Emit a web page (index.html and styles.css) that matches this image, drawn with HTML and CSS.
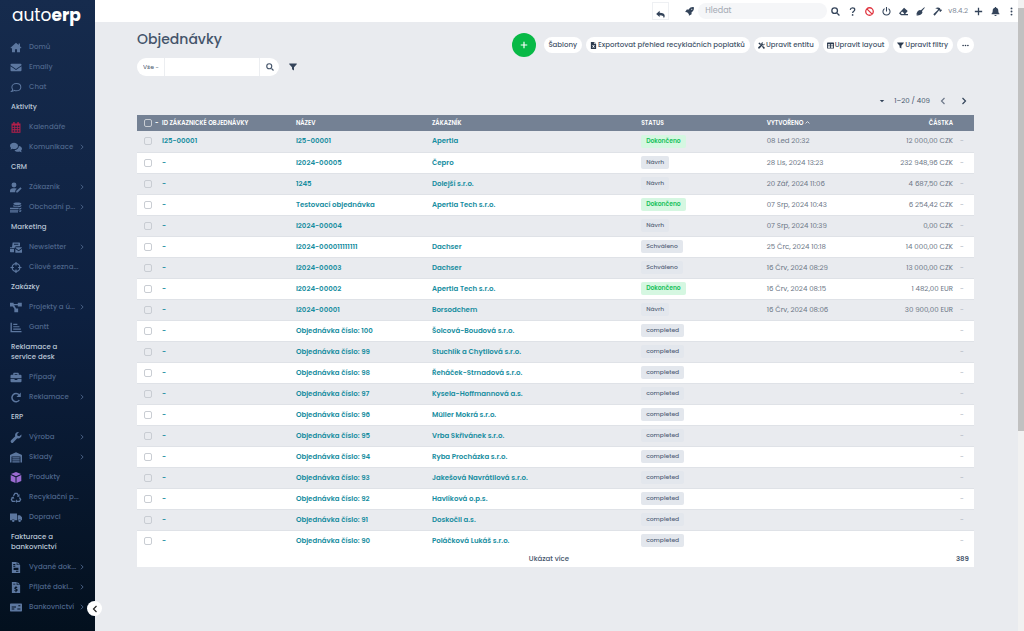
FILE: index.html
```html
<!DOCTYPE html>
<html lang="cs">
<head>
  <meta charset="UTF-8" />
  <meta name="viewport" content="width=device-width, initial-scale=1.0"/>
  <title>Objednávky</title>
  <link rel="stylesheet" href="styles.css">
</head>
<body>
  <!-- Icon set -->
  <svg class="sprite" aria-hidden="true">
    <symbol id="i-home" viewBox="0 0 16 16"><path d="M8 1 0 8.2l1 1.1 1.2-1V15h4.3v-4.6h3V15h4.3V8.300l1.200 1 1-1.100-2.200-2V2.200h-2v2.100z"/></symbol>
    <symbol id="i-mail" viewBox="0 0 16 16"><path d="M1.500 2.500h13A1.500 1.500 0 0 1 16 4v.7L8 10 0 4.700V4a1.500 1.500 0 0 1 1.500-1.500zM0 6.300l8 5.200 8-5.200V12a1.500 1.500 0 0 1-1.500 1.500h-13A1.500 1.500 0 0 1 0 12z"/></symbol>
    <symbol id="i-chat" viewBox="0 0 16 16"><path d="M8.500 2.200c3.800 0 6.500 2.300 6.500 5.300s-2.700 5.300-6.500 5.300c-1 0-2-.2-2.800-.5-1 .8-2.400 1.500-4.200 1.500 1-.9 1.500-2 1.700-3.100A4.800 4.800 0 0 1 2 7.500c0-3 2.700-5.300 6.500-5.300z" fill="none" stroke="currentColor" stroke-width="1.500"/></symbol>
    <symbol id="i-calendar" viewBox="0 0 16 16"><path fill-rule="evenodd" d="M4 0h2v2h4V0h2v2h2.500v13.500h-13V2H4zM3 5v2.500h2.500V5zm3.800 0v2.500h2.500V5zm3.700 0v2.500H13V5zM3 8.800v1.700h2.500V8.800zm3.800 0v1.700h2.500V8.800zm3.700 0v1.700H13V8.800zM3 12v2h2.500v-2zm3.800 0v2h2.500v-2zm3.700 0v2H13v-2z"/></symbol>
    <symbol id="i-comments" viewBox="0 0 18 16"><path d="M6 1c3.400 0 6 2 6 4.600s-2.600 4.700-6 4.700c-.8 0-1.600-.1-2.300-.4-.8.600-2 1.100-3.400 1.100.7-.7 1.100-1.500 1.300-2.400C.6 7.800 0 6.800 0 5.600 0 3 2.600 1 6 1z"/><path d="M13.300 5.800C16 6.100 18 7.900 18 10c0 1.100-.6 2.100-1.500 2.900.2.900.700 1.600 1.300 2.300-1.400 0-2.500-.5-3.400-1.100-.7.200-1.500.4-2.300.4-2.300 0-4.300-1-5.300-2.500 3.700-.3 6.700-2.800 6.500-6.200z"/></symbol>
    <symbol id="i-user" viewBox="0 0 18 16"><circle cx="6" cy="4.200" r="3.700"/><path d="M0 15v-2.200C0 10.500 2 9 4.200 9h3.600c1 0 1.800.3 2.500.8l-2 2-.6 3.200zM15.500 7.500l2 2-6 6H9.300v-2.200z"/></symbol>
    <symbol id="i-coins" viewBox="0 0 18 16"><path d="M5 2.500C5 1.300 7.700.5 11 .5s6 .8 6 2-2.700 2-6 2-6-.8-6-2zM5 4.300C6.300 5.200 8.500 5.600 11 5.600s4.800-.5 6-1.300v1.600c0 .7-1.500 1.400-3.500 1.700L12 6.800H5zM14 8.900c1.300-.2 2.300-.6 3-1v1.600c0 .7-1.300 1.400-3 1.700zM14 12.600c1.300-.3 2.300-.6 3-1v1.500c0 .7-1.300 1.300-3 1.700z"/><path d="M0 8.500h13v1.700H0zm0 2.700h12.500v1.500H0zm0 2.500h12v1.800H0z"/></symbol>
    <symbol id="i-bulk" viewBox="0 0 18 16"><path d="M4 .5h10a1 1 0 0 1 1 1V6H9.500A2.500 2.500 0 0 0 7 8.500V9H0V7.500h3zm2 2v1.300h6.500V2.500zM0 10.200h6V15H1a1 1 0 0 1-1-1z"/><path d="M9 7.500h8a1 1 0 0 1 1 1L13 12 8 8.500a1 1 0 0 1 1-1zM8 10.200l5 3.500 5-3.500V15a.8.800 0 0 1-1 1H9a1 1 0 0 1-1-1z"/></symbol>
    <symbol id="i-target" viewBox="0 0 16 16"><g fill="none" stroke="currentColor" stroke-width="1.800"><circle cx="8" cy="8" r="5.600"/><path d="M8 0v5M8 11v5M0 8h5M11 8h5"/></g></symbol>
    <symbol id="i-project" viewBox="0 0 18 16"><path d="M0 1h5.500v1.800h6.200V1h6v5.500h-6V4.700H6.200l3 4.800h3V15H6.500V9.700L4.200 6.500H0z"/></symbol>
    <symbol id="i-gantt" viewBox="0 0 16 16"><path d="M0 1h2v12h14v2H0zM4 2.500h6v1.800H4zm0 3.500h9v1.800H4zm0 3.500h11v1.800H4z"/></symbol>
    <symbol id="i-case" viewBox="0 0 16 16"><path fill-rule="evenodd" d="M5 1h6a1 1 0 0 1 1 1v2h2.500A1.500 1.500 0 0 1 16 5.500V9H0V5.500A1.500 1.500 0 0 1 1.500 4H4V2a1 1 0 0 1 1-1zm1 1.800V4h4V2.800zM0 10.200h6v1.600h4v-1.600h6v3.300a1.500 1.500 0 0 1-1.500 1.500h-13A1.500 1.500 0 0 1 0 13.500z"/></symbol>
    <symbol id="i-redo" viewBox="0 0 16 16"><path d="M12.800 11.800A6 6 0 1 1 12.500 4" fill="none" stroke="currentColor" stroke-width="2.200"/><path d="M15 .8v6.400H8.600z"/></symbol>
    <symbol id="i-wrench" viewBox="0 0 16 16"><path d="M15.800 3.700a4.600 4.600 0 0 1-6 5.400l-5.900 6a2 2 0 0 1-3-3l6-5.900A4.600 4.600 0 0 1 12.300.2L9.700 2.800l.4 2.700 2.700.5z"/></symbol>
    <symbol id="i-store" viewBox="0 0 18 16"><path d="M9 0l8.300 3.800a1 1 0 0 1 .7 1V15.500h-2.300V6.500H2.300v9H0V4.800a1 1 0 0 1 .7-1zM3.500 7.700h11v1.800h-11zm0 3h11v1.800h-11zm0 3h11v1.800h-11z"/></symbol>
    <symbol id="i-cube" viewBox="0 0 16 16"><path d="M8 0l7.300 3L8 6 .7 3zM.3 4.500l7 3V16l-7-3zM15.700 4.500l-7 3V16l7-3z"/></symbol>
    <symbol id="i-recycle" viewBox="0 0 16 16"><path d="M4.300 5.500 6.500 2h3l2 3.200M13 8l1.700 3-1.500 2.500H9M6.500 13.500H2.700L1.300 11 3 8" fill="none" stroke="currentColor" stroke-width="1.900"/><path d="M13 3v4H9.200zM9.500 10.500v5.500L6.800 13.300zM.8 7.500 4.600 6.500 5.500 10z"/></symbol>
    <symbol id="i-truck" viewBox="0 0 18 16"><path d="M0 2h10.500v10H7a2.200 2.200 0 0 0-4.200 0H0zM11.500 4.500H15l3 3.300V12h-1.500a2.200 2.200 0 0 0-4.200 0h-.8z"/><circle cx="4.900" cy="12.800" r="1.900"/><circle cx="14.400" cy="12.800" r="1.900"/></symbol>
    <symbol id="i-file" viewBox="0 0 16 16"><path fill-rule="evenodd" d="M2 0h7v4.500h5V16H2zM4 3v1.200h3V3zm0 2.600v1.200h3V5.600zM4.500 8.500v3h7v-3zm3.500 4.300V14h3.500v-1.200z"/><path d="M10 0l4 3.700h-4z"/></symbol>
    <symbol id="i-invoice" viewBox="0 0 16 16"><path fill-rule="evenodd" d="M2 0h7v4.500h5V16H2zM4 2.500v1.200h3V2.500zM7.300 6v1.200c-1 .2-1.800.8-1.800 1.800 0 2 3 1.600 3 2.600 0 .6-1.600.6-2.500 0l-.5 1.300c.5.300 1.100.5 1.800.6V15h1.400v-1.500c1-.2 1.800-.8 1.800-1.800 0-2.200-3-1.800-3-2.700 0-.5 1.300-.5 2.100-.1l.5-1.200a4 4 0 0 0-1.400-.5V6z"/><path d="M10 0l4 3.700h-4z"/></symbol>
    <symbol id="i-bank" viewBox="0 0 18 16"><path fill-rule="evenodd" d="M1 2h16a1 1 0 0 1 1 1v10a1 1 0 0 1-1 1H1a1 1 0 0 1-1-1V3a1 1 0 0 1 1-1zm1.500 4.500V8H9V6.500zm0 3V11h4V9.500zm8.500 0V11h4.500V9.500zm1.500-5V6h3V4.500z"/></symbol>
    <symbol id="i-right" viewBox="0 0 16 16"><path d="M5 2l6 6-6 6" fill="none" stroke="currentColor" stroke-width="2.400"/></symbol>
    <symbol id="i-left" viewBox="0 0 16 16"><path d="M11 2L5 8l6 6" fill="none" stroke="currentColor" stroke-width="2.400"/></symbol>
    <symbol id="i-up" viewBox="0 0 16 16"><path d="M2 11l6-6 6 6" fill="none" stroke="currentColor" stroke-width="2.500"/></symbol>
    <symbol id="i-caret" viewBox="0 0 16 16"><path d="M2 5h12l-6 6z"/></symbol>
    <symbol id="i-reply" viewBox="0 0 16 16"><path d="M6.500 1.500v3.200c5.500.1 9 1.500 9 6 0 1.600-.8 3-2 4 .8-3.700-1.500-5.200-7-5.300v3.200L.3 7z"/></symbol>
    <symbol id="i-rocket" viewBox="0 0 16 16"><path fill-rule="evenodd" d="M15.700.3C11.500-.3 9 1 6.700 4.300H3.200L.3 9l3.400.200 3.100 3.100L7 15.700l4.700-2.900V9.300C15 7 16.300 4.500 15.700.3zM12 3a1 1 0 1 1 0 2 1 1 0 0 1 0-2z"/></symbol>
    <symbol id="i-search" viewBox="0 0 16 16"><circle cx="6.500" cy="6.500" r="5" fill="none" stroke="currentColor" stroke-width="2.300"/><path d="M10.200 11.800l1.600-1.600 4 4-1.600 1.600z"/></symbol>
    <symbol id="i-help" viewBox="0 0 16 16"><path d="M4 5c.3-2.500 2-3.500 4-3.500 2.300 0 4 1.200 4 3.200C12 7.500 8.200 7.300 8.200 10.500" fill="none" stroke="currentColor" stroke-width="2.200"/><circle cx="8.200" cy="14" r="1.500"/></symbol>
    <symbol id="i-ban" viewBox="0 0 16 16"><path d="M8 1.300a6.700 6.700 0 1 1 0 13.400A6.700 6.700 0 0 1 8 1.300zM3.300 3.300l9.400 9.400" fill="none" stroke="currentColor" stroke-width="2.300"/></symbol>
    <symbol id="i-power" viewBox="0 0 16 16"><path d="M4.500 2.800a6.300 6.300 0 1 0 7 0M8 0v8" fill="none" stroke="currentColor" stroke-width="1.900"/></symbol>
    <symbol id="i-eraser" viewBox="0 0 16 16"><path fill-rule="evenodd" d="M9 1.500 15.500 7 11 12.500h5v2H3.500L0 11zM5.500 8 3 10.800l1.700 1.700h3.500l1-1.200z"/></symbol>
    <symbol id="i-broom" viewBox="0 0 16 16"><path d="M14.700.3l1 1-5.200 6.200 1 1.500c-.5 3.800-3.500 6-10.900 6.200l2.300-2.400-2.400.8C1.300 9 3.300 6.200 7 5.300l1.700.6z"/></symbol>
    <symbol id="i-hammer" viewBox="0 0 16 16"><path d="M4 2.500C7 0 10.500.2 12.500 2.300L13 4l1 .8 1-.2 1 1.200-3 3.100-1.200-1.100V6.600l-1-.9L3 15.500.5 13 9 5 7.500 3.200z"/></symbol>
    <symbol id="i-plus" viewBox="0 0 16 16"><path d="M8 1.500v13M1.500 8h13" fill="none" stroke="currentColor" stroke-width="2.300"/></symbol>
    <symbol id="i-bell" viewBox="0 0 16 16"><path d="M7 0h2v1.500c2.500.5 4 2.300 4 5 0 3 .7 4 2 5.200v1.300H1v-1.300C2.300 10.500 3 9.500 3 6.500c0-2.700 1.500-4.500 4-5zM6 14h4a2 2 0 0 1-4 0z"/></symbol>
    <symbol id="i-dots-v" viewBox="0 0 16 16"><circle cx="8" cy="2.500" r="1.700"/><circle cx="8" cy="8" r="1.700"/><circle cx="8" cy="13.500" r="1.700"/></symbol>
    <symbol id="i-dots" viewBox="0 0 16 16"><circle cx="2.500" cy="8" r="1.900"/><circle cx="8" cy="8" r="1.900"/><circle cx="13.500" cy="8" r="1.900"/></symbol>
    <symbol id="i-filter" viewBox="0 0 16 16"><path d="M.5 1h15v1.500L10 8.500V15l-4-2.500v-4L.5 2.500z"/></symbol>
    <symbol id="i-excel" viewBox="0 0 16 16"><path fill-rule="evenodd" d="M2 0h7v4.500h5V16H2zM5 7l2 3-2 3.300h1.800L8 11.200l1.200 2.100H11L9 10l2-3H9.200L8 8.800 6.800 7z"/><path d="M10 0l4 3.700h-4z"/></symbol>
    <symbol id="i-tools" viewBox="0 0 16 16"><path d="M3 1l3.500 3v1.500l5.500 5h1.500l2.300 3L13.500 15.800l-3-2.600v-1.700L5.300 6.300H4L.8 3z"/><path d="M15.500 3.500a4 4 0 0 1-5.300 4L4 14.500a2 2 0 0 1-3-2.800l6.500-6A4 4 0 0 1 12 .5L10.300 2.800l.5 2.300 2.300.4z"/></symbol>
    <symbol id="i-table" viewBox="0 0 16 16"><path fill-rule="evenodd" d="M1.500 1h13A1.500 1.500 0 0 1 16 2.500v11a1.500 1.500 0 0 1-1.500 1.500h-13A1.500 1.500 0 0 1 0 13.500v-11A1.500 1.500 0 0 1 1.500 1zM2 5v2.800h5V5zm7 0v2.800h5V5zM2 9.700V13h5V9.700zm7 0V13h5V9.700z"/></symbol>
  </svg>

  <div class="app">
    <aside class="sidebar">
      <a class="logo" href="#">auto<b>erp</b></a>
      <nav>
        <a class="nav-item" href="#"><svg><use href="#i-home"/></svg><span>Domů</span></a>
        <a class="nav-item" href="#"><svg><use href="#i-mail"/></svg><span>Emaily</span></a>
        <a class="nav-item" href="#"><svg><use href="#i-chat"/></svg><span>Chat</span></a>
        <h2>Aktivity</h2>
        <a class="nav-item" href="#"><svg class="red"><use href="#i-calendar"/></svg><span>Kalendáře</span></a>
        <a class="nav-item" href="#"><svg><use href="#i-comments"/></svg><span>Komunikace</span><svg class="more"><use href="#i-right"/></svg></a>
        <h2>CRM</h2>
        <a class="nav-item" href="#"><svg><use href="#i-user"/></svg><span>Zákazník</span><svg class="more"><use href="#i-right"/></svg></a>
        <a class="nav-item" href="#"><svg><use href="#i-coins"/></svg><span>Obchodní p...</span><svg class="more"><use href="#i-right"/></svg></a>
        <h2>Marketing</h2>
        <a class="nav-item" href="#"><svg><use href="#i-bulk"/></svg><span>Newsletter</span><svg class="more"><use href="#i-right"/></svg></a>
        <a class="nav-item" href="#"><svg><use href="#i-target"/></svg><span>Cílové sezna...</span></a>
        <h2>Zakázky</h2>
        <a class="nav-item" href="#"><svg><use href="#i-project"/></svg><span>Projekty a ú...</span><svg class="more"><use href="#i-right"/></svg></a>
        <a class="nav-item" href="#"><svg><use href="#i-gantt"/></svg><span>Gantt</span></a>
        <h2>Reklamace a service desk</h2>
        <a class="nav-item" href="#"><svg><use href="#i-case"/></svg><span>Případy</span></a>
        <a class="nav-item" href="#"><svg><use href="#i-redo"/></svg><span>Reklamace</span><svg class="more"><use href="#i-right"/></svg></a>
        <h2>ERP</h2>
        <a class="nav-item" href="#"><svg><use href="#i-wrench"/></svg><span>Výroba</span><svg class="more"><use href="#i-right"/></svg></a>
        <a class="nav-item" href="#"><svg><use href="#i-store"/></svg><span>Sklady</span><svg class="more"><use href="#i-right"/></svg></a>
        <a class="nav-item" href="#"><svg class="purple"><use href="#i-cube"/></svg><span>Produkty</span></a>
        <a class="nav-item" href="#"><svg><use href="#i-recycle"/></svg><span>Recyklační p...</span></a>
        <a class="nav-item" href="#"><svg><use href="#i-truck"/></svg><span>Dopravci</span></a>
        <h2>Fakturace a bankovnictví</h2>
        <a class="nav-item" href="#"><svg><use href="#i-file"/></svg><span>Vydané dok...</span><svg class="more"><use href="#i-right"/></svg></a>
        <a class="nav-item" href="#"><svg><use href="#i-invoice"/></svg><span>Přijaté dokl...</span><svg class="more"><use href="#i-right"/></svg></a>
        <a class="nav-item" href="#"><svg><use href="#i-bank"/></svg><span>Bankovnictví</span><svg class="more"><use href="#i-right"/></svg></a>
      </nav>
      <button class="collapse" type="button" aria-label="Sbalit menu"><svg><use href="#i-left"/></svg></button>
    </aside>

    <div class="page">
      <header class="topbar">
        <button class="back" type="button" aria-label="Zpět"><svg><use href="#i-reply"/></svg></button>
        <button class="icon-btn" type="button" aria-label="Rychlý start"><svg><use href="#i-rocket"/></svg></button>
        <input class="global-search" type="search" placeholder="Hledat" aria-label="Hledat">
        <div class="tools">
          <button class="icon-btn" type="button" aria-label="Vyhledat"><svg><use href="#i-search"/></svg></button>
          <button class="icon-btn" type="button" aria-label="Nápověda"><svg><use href="#i-help"/></svg></button>
          <button class="icon-btn ban" type="button" aria-label="Zakázat"><svg><use href="#i-ban"/></svg></button>
          <button class="icon-btn" type="button" aria-label="Vypnout"><svg><use href="#i-power"/></svg></button>
          <button class="icon-btn" type="button" aria-label="Vymazat"><svg><use href="#i-eraser"/></svg></button>
          <button class="icon-btn" type="button" aria-label="Vyčistit"><svg><use href="#i-broom"/></svg></button>
          <button class="icon-btn" type="button" aria-label="Sestavit"><svg><use href="#i-hammer"/></svg></button>
          <span class="version">v8.4.2</span>
          <button class="icon-btn" type="button" aria-label="Přidat"><svg><use href="#i-plus"/></svg></button>
          <button class="icon-btn" type="button" aria-label="Upozornění"><svg><use href="#i-bell"/></svg></button>
          <button class="icon-btn narrow" type="button" aria-label="Další"><svg><use href="#i-dots-v"/></svg></button>
        </div>
      </header>

      <main>
        <div class="page-head">
          <h1>Objednávky</h1>
          <div class="actions">
            <button class="add" type="button" aria-label="Vytvořit"><svg><use href="#i-plus"/></svg></button>
            <button class="pill" type="button">Šablony</button>
            <button class="pill" type="button"><svg><use href="#i-excel"/></svg>Exportovat přehled recyklačních poplatků</button>
            <button class="pill" type="button"><svg><use href="#i-tools"/></svg>Upravit entitu</button>
            <button class="pill" type="button"><svg><use href="#i-table"/></svg>Upravit layout</button>
            <button class="pill" type="button"><svg><use href="#i-filter"/></svg>Upravit filtry</button>
            <button class="pill round" type="button" aria-label="Více"><svg><use href="#i-dots"/></svg></button>
          </div>
        </div>

        <div class="search-row">
          <form class="search-box">
            <select aria-label="Filtr"><option>Vše -</option></select>
            <input type="text" aria-label="Hledaný text">
            <button type="button" aria-label="Hledat"><svg><use href="#i-search"/></svg></button>
          </form>
          <button class="icon-btn" type="button" aria-label="Filtry"><svg><use href="#i-filter"/></svg></button>
        </div>

        <div class="pager">
          <button class="icon-btn small" type="button" aria-label="Možnosti"><svg><use href="#i-caret"/></svg></button>
          <span>1–20 / 409</span>
          <button class="icon-btn dim" type="button" aria-label="Předchozí"><svg><use href="#i-left"/></svg></button>
          <button class="icon-btn" type="button" aria-label="Další strana"><svg><use href="#i-right"/></svg></button>
        </div>

        <table class="orders">
          <thead>
            <tr>
              <th class="c-check"><input type="checkbox" aria-label="Vybrat vše"><span class="check-menu">-</span></th>
              <th class="c-id">ID zákaznické objednávky</th>
              <th class="c-name">Název</th>
              <th class="c-customer">Zákazník</th>
              <th class="c-status">Status</th>
              <th class="c-created">Vytvořeno <svg><use href="#i-up"/></svg></th>
              <th class="c-amount">Částka</th>
              <th class="c-menu"></th>
            </tr>
          </thead>
          <tbody id="orderRows"></tbody>
        </table>
        <div class="table-foot">
          <button type="button">Ukázat více</button>
          <span>389</span>
        </div>
      </main>
    </div>

    <div class="scrollbar"><div class="thumb"></div></div>
  </div>
  <script src="script.js"></script>
</body>
</html>
```

FILE: styles.css
```css
* {
  box-sizing: border-box;
}

body {
  margin: 0;
  font-family: Poppins, Inter, "Noto Sans", sans-serif;
  font-size: 7px;
  line-height: 10px;
  color: #44546a;
  background-color: #e9ebef;
}

button, input, select {
  font: inherit;
  color: inherit;
  border: 0;
  padding: 0;
  background: none;
}

button {
  cursor: pointer;
}

a {
  color: inherit;
  text-decoration: none;
}

svg {
  display: block;
  width: 8px;
  height: 8px;
  fill: currentColor;
  flex: none;
}

.sprite {
  position: absolute;
  width: 0;
  height: 0;
}

.app {
  display: flex;
  min-height: 100vh;
}

/* Sidebar */
.sidebar {
  position: relative;
  flex: none;
  width: 95px;
  padding: 4px 0 14px;
  background: linear-gradient(#162b4d, #0d2040 50%, #03101e);
}

.logo {
  display: block;
  height: 33px;
  padding-left: 12px;
  font-size: 17px;
  line-height: 22px;
  font-weight: 400;
  color: #fff;
}

.logo b {
  font-weight: 700;
}

.sidebar h2 {
  margin: 0;
  padding: 5px 20px 5px 11px;
  font-size: 7px;
  line-height: 10px;
  font-weight: 500;
  color: #bcc8d8;
}

.nav-item {
  display: flex;
  align-items: center;
  height: 20px;
  padding: 0 10px 0 10px;
  font-weight: 500;
  color: #4e668b;
}

.nav-item svg {
  width: 12px;
  height: 11px;
  margin-right: 7px;
  color: #5c779f;
}

.nav-item span {
  flex: 1;
  white-space: nowrap;
}

.nav-item .more {
  width: 6px;
  height: 6px;
  margin: 0;
  color: #4e668b;
}

.nav-item .red {
  color: #b51f4a;
}

.nav-item .purple {
  color: #9a6bd0;
}

.collapse {
  position: absolute;
  right: -7px;
  bottom: 15px;
  display: flex;
  align-items: center;
  justify-content: center;
  width: 15px;
  height: 15px;
  border-radius: 50%;
  color: #222;
  background-color: #fff;
}

/* Top bar */
.page {
  flex: 1;
  min-width: 0;
}

.topbar {
  display: flex;
  align-items: center;
  justify-content: flex-end;
  height: 22px;
  background-color: #fff;
}

.icon-btn {
  display: flex;
  align-items: center;
  justify-content: center;
  width: 17px;
  height: 16px;
  color: #34445a;
}

.icon-btn.narrow {
  width: 14px;
}

.back {
  display: flex;
  align-items: flex-end;
  justify-content: center;
  width: 17px;
  height: 18px;
  margin-right: 12px;
  border: 1px solid #eef0f3;
  color: #34445a;
}

.topbar svg {
  width: 9px;
  height: 9px;
}

.global-search {
  width: 129px;
  height: 16px;
  padding: 0 7px;
  border-radius: 8px;
  font-size: 8px;
  background-color: #f5f6f8;
}

.global-search::placeholder {
  color: #a3a9b3;
}

.tools {
  display: flex;
  align-items: center;
}

.ban {
  color: #e0343f;
}

.version {
  padding: 0 2px;
  color: #7c8796;
}

/* Page heading */
main {
  padding: 10px 44px 20px 42px;
}

.page-head {
  display: flex;
  justify-content: space-between;
  height: 26px;
}

h1 {
  margin: 0;
  font-size: 14px;
  line-height: 15px;
  font-weight: 500;
  color: #44546a;
}

.actions {
  display: flex;
  align-items: center;
  gap: 4px;
}

.add {
  display: flex;
  align-items: center;
  justify-content: center;
  width: 24px;
  height: 24px;
  margin-right: 4px;
  border-radius: 50%;
  color: #fff;
  background-color: #08b946;
}

.pill {
  display: flex;
  align-items: center;
  gap: 1px;
  height: 16px;
  padding: 0 5px 0 4px;
  border-radius: 8px;
  font-weight: 500;
  white-space: nowrap;
  background-color: #fff;
}

.pill svg {
  width: 7px;
  height: 7px;
  color: #2b3a4e;
}

.round {
  justify-content: center;
  width: 17px;
  padding: 0;
}

.search-row {
  display: flex;
  align-items: center;
  gap: 5px;
  height: 18px;
}

.search-box {
  display: flex;
  width: 142px;
  height: 18px;
  border-radius: 9px;
  overflow: hidden;
  background-color: #fff;
}

.search-box select {
  width: 28px;
  padding-left: 6px;
  border-right: 1px solid #eceef1;
  font-size: 6px;
  appearance: none;
}

.search-box input {
  flex: 1;
  min-width: 0;
}

.search-box button {
  display: flex;
  align-items: center;
  justify-content: center;
  width: 20px;
  border-left: 1px solid #eceef1;
}

/* Paging */
.pager {
  display: flex;
  align-items: center;
  justify-content: flex-end;
  gap: 4px;
  margin: 17px 2px 6px 0;
}

.pager .small svg {
  width: 6px;
  height: 6px;
}

.pager .dim {
  color: #6d7889;
}

/* Orders table */
.orders {
  width: 100%;
  table-layout: fixed;
  border-collapse: collapse;
}

.orders th,
.orders td {
  padding: 0;
  text-align: left;
  white-space: nowrap;
}

.orders th {
  height: 16px;
  font-size: 6px;
  font-weight: 600;
  text-transform: uppercase;
  color: #fff;
  background-color: #748194;
}

.orders th svg {
  display: inline-block;
  width: 5px;
  height: 5px;
}

.orders td {
  height: 21px;
  border-bottom: 1px solid #dfe2e7;
  color: #6b7686;
}

.orders tbody tr:nth-child(even) {
  background-color: #fff;
}

.orders tbody tr:last-child td {
  border-bottom: 0;
}

.orders input {
  appearance: none;
  display: inline-block;
  width: 8px;
  height: 8px;
  margin: 0 0 0 7px;
  border: 1px solid #c9cdd3;
  border-radius: 2px;
  vertical-align: middle;
}

.orders a {
  font-weight: 600;
  color: #168da0;
}

.check-menu {
  margin-left: 3px;
}

.c-check { width: 25px; }
.c-id { width: 16%; }
.c-name { width: 136px; }
.c-customer { width: 25%; }
.c-status { width: 15%; }
.c-created { width: 14%; }
.c-menu { width: 21px; }

.orders .c-amount {
  text-align: right;
}

.orders .c-menu {
  padding-left: 7px;
  color: #adb4be;
}

.badge {
  display: inline-block;
  padding: 2px 5px;
  border-radius: 2px;
  font-size: 6px;
  line-height: 9px;
  font-weight: 500;
  color: #56647a;
  background-color: #e3e7ed;
}

.badge.done {
  font-weight: 600;
  color: #18c25b;
  background-color: #d5f7e1;
}

.table-foot {
  display: flex;
  align-items: center;
  height: 16px;
  padding: 0 5px;
  font-weight: 500;
  background-color: #fff;
}

.table-foot button {
  flex: 1;
  font-weight: 500;
}

.table-foot span {
  font-weight: 600;
}

/* Page scroll track */
.scrollbar {
  flex: none;
  width: 6px;
  padding-top: 8px;
  background-color: #f1f1f1;
}

.thumb {
  height: 67vh;
  background-color: #c1c1c1;
}
```

FILE: script.js
```js
// id, name, customer, status, created, amount
const orders = [
  ['I25-00001', 'I25-00001', 'Apertia', 'Dokončeno', '08 Led 20:32', '12 000,00 CZK'],
  ['-', 'I2024-00005', 'Čepro', 'Návrh', '28 Lis, 2024 13:23', '232 948,96 CZK'],
  ['-', '1245', 'Dolejší s.r.o.', 'Návrh', '20 Zář, 2024 11:06', '4 687,50 CZK'],
  ['-', 'Testovací objednávka', 'Apertia Tech s.r.o.', 'Dokončeno', '07 Srp, 2024 10:43', '6 254,42 CZK'],
  ['-', 'I2024-00004', '', 'Návrh', '07 Srp, 2024 10:39', '0,00 CZK'],
  ['-', 'I2024-000011111111', 'Dachser', 'Schváleno', '25 Črc, 2024 10:18', '14 000,00 CZK'],
  ['-', 'I2024-00003', 'Dachser', 'Schváleno', '16 Črv, 2024 08:29', '13 000,00 CZK'],
  ['-', 'I2024-00002', 'Apertia Tech s.r.o.', 'Dokončeno', '16 Črv, 2024 08:15', '1 482,00 EUR'],
  ['-', 'I2024-00001', 'Borsodchem', 'Návrh', '16 Črv, 2024 08:06', '30 900,00 EUR'],
  ['-', 'Objednávka číslo: 100', 'Šolcová-Boudová s.r.o.', 'completed', '', ''],
  ['-', 'Objednávka číslo: 99', 'Stuchlík a Chytilová s.r.o.', 'completed', '', ''],
  ['-', 'Objednávka číslo: 98', 'Řeháček-Strnadová s.r.o.', 'completed', '', ''],
  ['-', 'Objednávka číslo: 97', 'Kysela-Hoffmannová a.s.', 'completed', '', ''],
  ['-', 'Objednávka číslo: 96', 'Müller Mokrá s.r.o.', 'completed', '', ''],
  ['-', 'Objednávka číslo: 95', 'Vrba Skřivánek s.r.o.', 'completed', '', ''],
  ['-', 'Objednávka číslo: 94', 'Ryba Procházka s.r.o.', 'completed', '', ''],
  ['-', 'Objednávka číslo: 93', 'Jakešová Navrátilová s.r.o.', 'completed', '', ''],
  ['-', 'Objednávka číslo: 92', 'Havlíková o.p.s.', 'completed', '', ''],
  ['-', 'Objednávka číslo: 91', 'Doskočil a.s.', 'completed', '', ''],
  ['-', 'Objednávka číslo: 90', 'Poláčková Lukáš s.r.o.', 'completed', '', '']
];

const link = (text) => text ? `<a href="#">${text}</a>` : '';

document.getElementById('orderRows').innerHTML = orders.map(([id, name, customer, status, created, amount]) => `
  <tr>
    <td><input type="checkbox" aria-label="Vybrat ${name}"></td>
    <td>${link(id)}</td>
    <td>${link(name)}</td>
    <td>${link(customer)}</td>
    <td><span class="badge${status === 'Dokončeno' ? ' done' : ''}">${status}</span></td>
    <td>${created}</td>
    <td class="c-amount">${amount}</td>
    <td class="c-menu">-</td>
  </tr>`).join('');
```
